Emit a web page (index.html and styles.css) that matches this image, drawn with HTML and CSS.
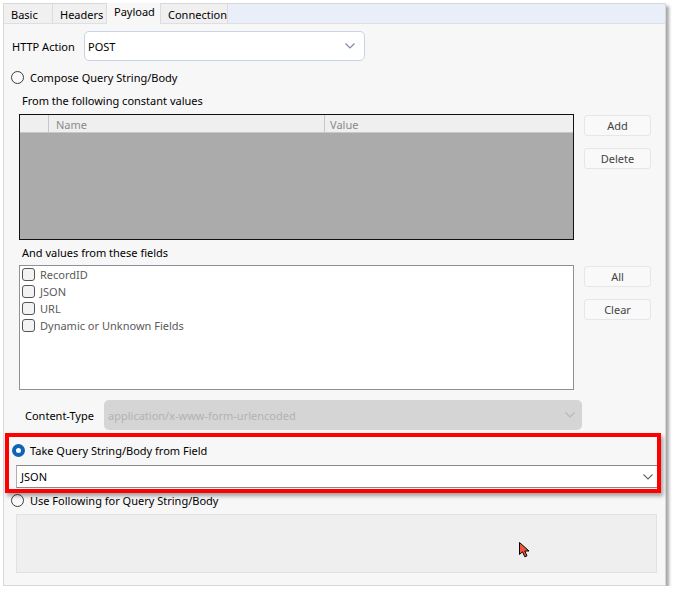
FILE: index.html
```html
<!DOCTYPE html>
<html>
<head>
<meta charset="utf-8">
<link rel="stylesheet" href="styles.css">
</head>
<body>
<div class="window">
  <div class="tabbar">
    <div class="tab">Basic</div>
    <div class="tab">Headers</div>
    <div class="tab active">Payload</div>
    <div class="tab">Connection</div>
  </div>
  <div class="panel">
    <div class="action-row">
      <span class="action-label">HTTP Action</span>
      <div class="select action-select">
        <span>POST</span>
        <svg class="chev" width="10" height="6" viewBox="0 0 10 6"><polyline points="0.5,0.5 5,5 9.5,0.5" fill="none" stroke="#7d8aa5" stroke-width="1.2"/></svg>
      </div>
    </div>
    <div class="radio-row compose">
      <span class="radio"></span>
      <span>Compose Query String/Body</span>
    </div>
    <div class="sublabel first">From the following constant values</div>
    <div class="split table-split">
      <div class="table">
        <div class="thead">
          <div class="th th-sel"></div>
          <div class="th th-name">Name</div>
          <div class="th th-value">Value</div>
        </div>
        <div class="tbody"></div>
      </div>
      <div class="btns">
        <div class="btn">Add</div>
        <div class="btn">Delete</div>
      </div>
    </div>
    <div class="sublabel second">And values from these fields</div>
    <div class="split list-split">
      <div class="list">
        <div class="check-row"><span class="check"></span>RecordID</div>
        <div class="check-row"><span class="check"></span>JSON</div>
        <div class="check-row"><span class="check"></span>URL</div>
        <div class="check-row"><span class="check"></span>Dynamic or Unknown Fields</div>
      </div>
      <div class="btns">
        <div class="btn">All</div>
        <div class="btn">Clear</div>
      </div>
    </div>
    <div class="ct-row">
      <span class="ct-label">Content-Type</span>
      <div class="select ct-select">
        <span>application/x-www-form-urlencoded</span>
        <svg class="chev" width="10" height="6" viewBox="0 0 10 6"><polyline points="0.5,0.5 5,5 9.5,0.5" fill="none" stroke="#b8b8b8" stroke-width="1.2"/></svg>
      </div>
    </div>
    <div class="highlight">
      <div class="radio-row take">
        <span class="radio on"></span>
        <span>Take Query String/Body from Field</span>
      </div>
      <div class="field-select">
        <span>JSON</span>
        <svg class="chev" width="10" height="6" viewBox="0 0 10 6"><polyline points="0.5,0.5 5,5 9.5,0.5" fill="none" stroke="#666" stroke-width="1.1"/></svg>
      </div>
    </div>
    <div class="radio-row use">
      <span class="radio"></span>
      <span>Use Following for Query String/Body</span>
    </div>
    <div class="textarea"></div>
    <svg class="cursor" width="14" height="18" viewBox="0 0 14 18"><path d="M1.5 1.5 L1.5 13.5 L4.5 10.8 L6.8 15.8 L9 14.8 L6.8 10 L11 10 Z" fill="#f0553a" stroke="#000" stroke-width="1" stroke-linejoin="miter"/></svg>
  </div>
</div>
</body>
</html>
```
FILE: styles.css
```css
* { box-sizing: border-box; }
html, body { margin: 0; padding: 0; background: #ffffff; }
body {
  font-family: "Noto Sans", "Open Sans", "Liberation Sans", sans-serif;
  font-size: 11px;
  color: #000;
}
.window {
  margin: 3px 0 0 3px;
  width: 663px;
  height: 583px;
  background: #f7f7f7;
  border: 1px solid #d8d8d8;
  box-shadow: 3px 3px 3px rgba(0,0,0,0.35);
  display: flex;
  flex-direction: column;
}
.tabbar {
  height: 20px;
  background: #e9eef8;
  border-bottom: 1px solid #dcdfe6;
  display: flex;
  align-items: flex-end;
}
.tab {
  height: 19px;
  padding: 1px 7px 0;
  line-height: 19px;
  background: #f0f0f0;
  border-right: 1px solid #dcdcdc;
}
.tab:nth-child(1) { width: 49px; }
.tab:nth-child(2) { width: 54px; }
.tab:nth-child(3) { width: 54px; }
.tab:nth-child(4) { width: 67px; }
.tab.active {
  background: #f7f7f7;
  height: 21px;
  margin-bottom: -1px;
  padding-top: 0;
  line-height: 18px;
  position: relative;
}
.panel {
  flex: 1;
  position: relative;
  display: flex;
  flex-direction: column;
}
.action-row {
  margin-top: 7px;
  display: flex;
  align-items: center;
  padding-left: 8px;
}
.action-label { width: 72px; }
.select {
  display: flex;
  align-items: center;
  justify-content: space-between;
  border-radius: 5px;
}
.action-select {
  width: 281px;
  height: 30px;
  background: #fff;
  border: 1px solid #c9d3e6;
  padding: 0 9px 0 3px;
}
.chev { display: block; }
.radio-row {
  display: flex;
  align-items: center;
  height: 18px;
}
.radio {
  width: 13px;
  height: 13px;
  border-radius: 50%;
  border: 1px solid #3c3c3c;
  background: #f9f9f9;
  margin-right: 6px;
  flex: none;
}
.radio.on {
  border: 4px solid #0f62b5;
  background: #fff;
  margin-right: 5px;
}
.compose { margin-top: 7px; padding-left: 7px; }
.sublabel { height: 16px; line-height: 16px; padding-left: 18px; }
.sublabel.first { margin-top: 7px; }
.sublabel.second { margin-top: 5px; }
.split {
  display: flex;
  align-items: flex-start;
  padding-left: 15px;
}
.table-split { margin-top: 5px; }
.list-split { margin-top: 4px; }
.table {
  width: 555px;
  height: 126px;
  border: 1px solid #111;
  background: #ababab;
  display: flex;
  flex-direction: column;
}
.thead {
  height: 18px;
  background: #efefef;
  border-bottom: 1px solid #c8c8c8;
  display: flex;
  color: #8a8a8a;
  line-height: 19px;
}
.th { height: 17px; }
.th-sel { width: 29px; border-right: 1px solid #c8c8c8; }
.th-name { width: 276px; padding-left: 7px; border-right: 1px solid #c8c8c8; }
.th-value { flex: 1; padding-left: 5px; }
.tbody { flex: 1; }
.btns {
  margin-left: 10px;
  display: flex;
  flex-direction: column;
  gap: 12px;
  padding-top: 1px;
}
.btn {
  width: 67px;
  height: 21px;
  border: 1px solid #e6e6e6;
  border-radius: 3px;
  background: #f9f9f9;
  color: #444;
  text-align: center;
  line-height: 19px;
}
.list {
  width: 555px;
  height: 125px;
  border: 1px solid #8b9099;
  background: #fff;
  padding-top: 0;
  padding-left: 2px;
}
.check-row {
  display: flex;
  align-items: center;
  height: 17px;
  color: #5a5a5a;
}
.check {
  width: 13px;
  height: 13px;
  border: 1px solid #555;
  border-radius: 3px;
  background: #f3f3f3;
  margin-right: 5px;
}
.ct-row {
  margin-top: 10px;
  display: flex;
  align-items: center;
  padding-left: 21px;
}
.ct-label { width: 79px; }
.ct-select {
  width: 478px;
  height: 30px;
  background: #d5d5d5;
  color: #b2b2b2;
  padding: 0 7px 0 4px;
}
.highlight {
  margin: 3px 0 0 1px;
  width: 656px;
  height: 60px;
  border: 4px solid #ff0000;
  box-shadow: 2px 3px 4px rgba(0,0,0,0.35);
  display: flex;
  flex-direction: column;
  position: relative;
  z-index: 1;
}
.take { margin-top: 4px; padding-left: 3px; }
.field-select {
  margin: 6px 0 0 7px;
  height: 23px;
  background: #fff;
  border-top: 1px solid #8a8a8a;
  border-bottom: 1px solid #8a8a8a;
  border-left: 1px solid #b0b0b0;
  display: flex;
  align-items: center;
  justify-content: space-between;
  padding: 0 4px 0 4px;
}
.use { margin-top: -2px; padding-left: 7px; }
.textarea {
  margin: 5px 0 0 12px;
  width: 641px;
  height: 59px;
  background: #efefef;
  border: 1px solid #e2e2e2;
}
.cursor {
  position: absolute;
  left: 514px;
  top: 517px;
}
```
